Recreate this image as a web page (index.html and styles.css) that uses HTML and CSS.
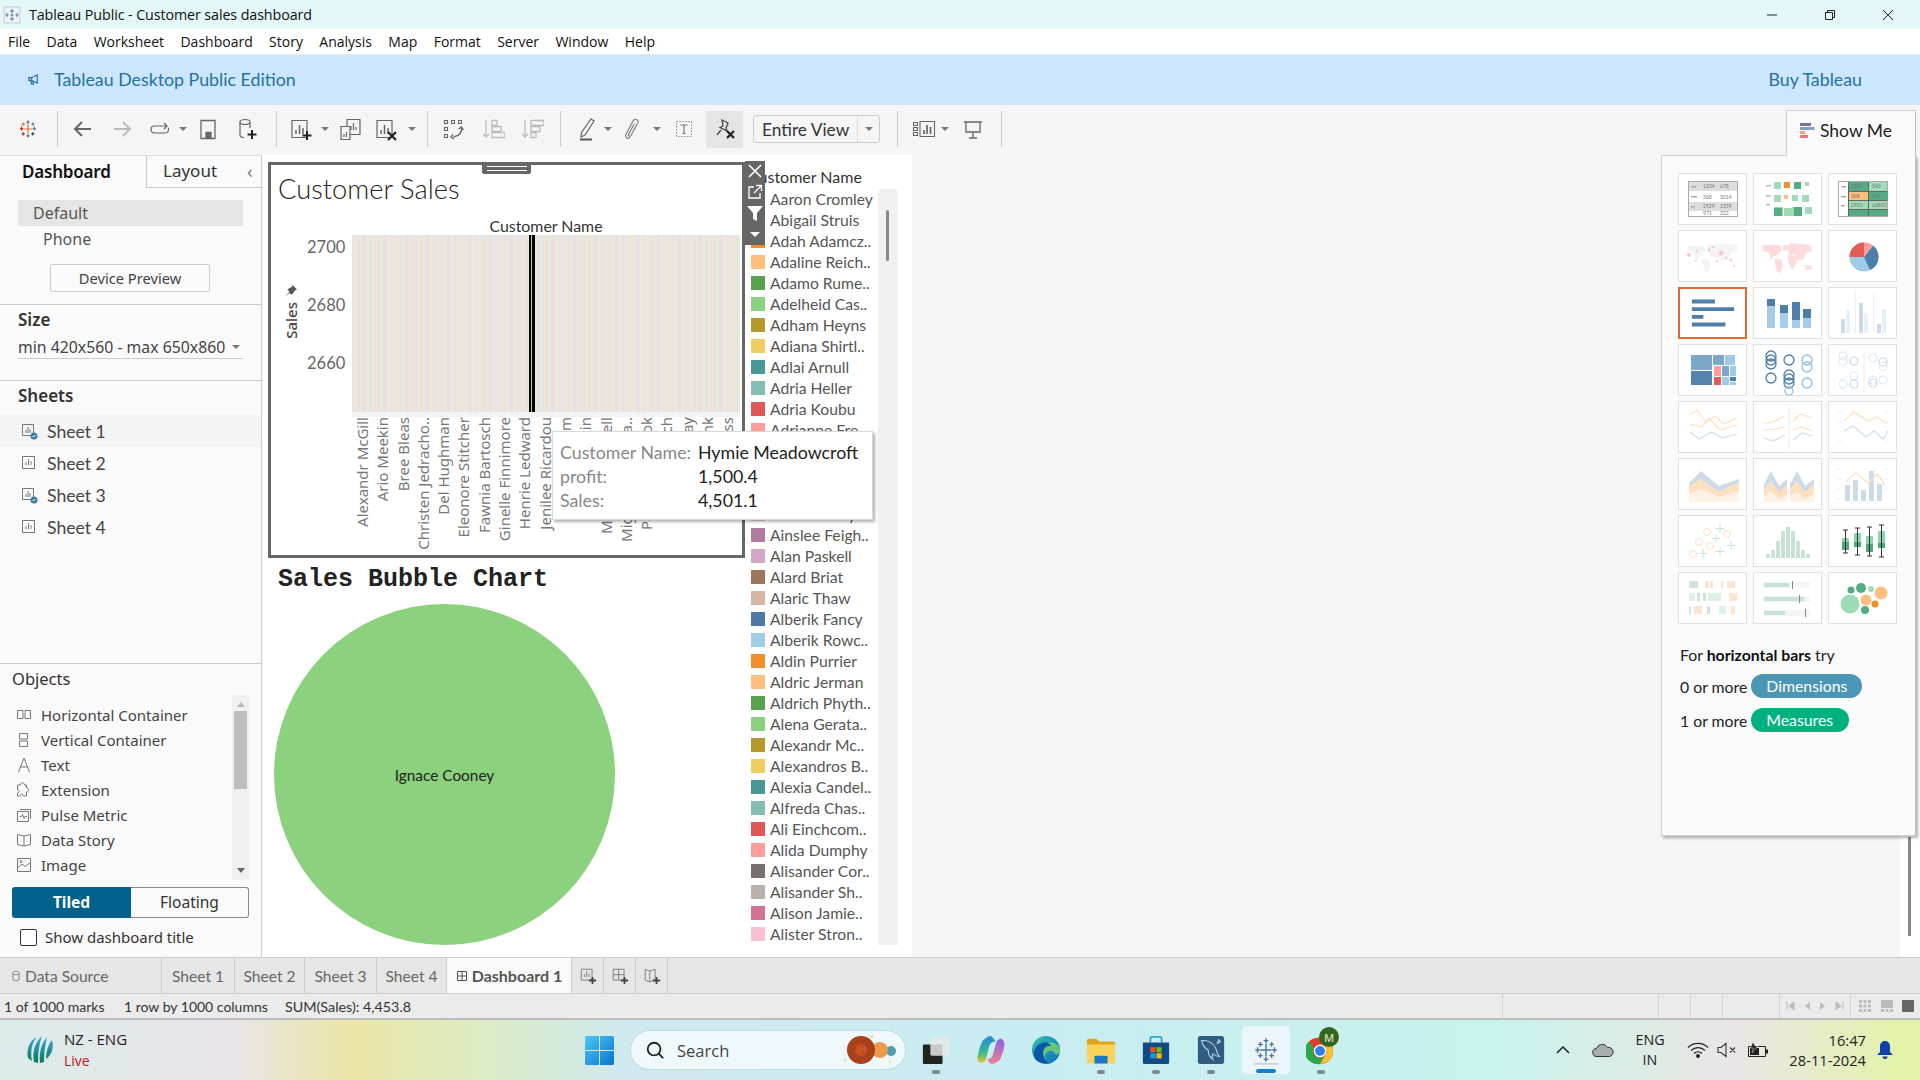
FILE: index.html
```html
<!DOCTYPE html>
<html lang="en">
<head>
<meta charset="utf-8">
<title>Tableau Public - Customer sales dashboard</title>
<link rel="stylesheet" href="styles.css">
</head>
<body>
<div class="app">

  <header class="titlebar">
    <svg class="app-icon" viewBox="0 0 18 18"><rect x="1" y="1" width="16" height="16" fill="#eef2f6" stroke="#c8ccd0"/><g stroke="#4f7fa8" stroke-width="1"><path d="M9 3v4M7 5h4M9 11v4M7 13h4M4 7v4M2.500 9h3M14 7v4M12.500 9h3M9 7.500v3M7.500 9h3"/></g></svg>
    <span class="title-text">Tableau Public - Customer sales dashboard</span>
    <div class="winctl">
      <svg viewBox="0 0 12 12"><path d="M1 6h10" stroke="#222" fill="none"/></svg>
      <svg viewBox="0 0 12 12"><path d="M1.500 3.500h7v7h-7zM3.500 3.500v-2h7v7h-2" stroke="#222" fill="none"/></svg>
      <svg viewBox="0 0 12 12"><path d="M1 1l10 10M11 1L1 11" stroke="#222" fill="none"/></svg>
    </div>
  </header>

  <nav class="menubar">
    <span>File</span><span>Data</span><span>Worksheet</span><span>Dashboard</span><span>Story</span><span>Analysis</span><span>Map</span><span>Format</span><span>Server</span><span>Window</span><span>Help</span>
  </nav>

  <div class="banner">
    <svg class="banner-icon" viewBox="0 0 14 14"><path d="M2 5h3l6-3v9L5 8H2zM5 5v3M4 8l1 4h2L6 8.500" fill="none" stroke="#1f6f9f" stroke-width="1.200"/></svg>
    <span class="banner-text">Tableau Desktop Public Edition</span>
    <span class="banner-buy">Buy Tableau</span>
  </div>

  <div class="toolbar">
    <svg class="tb" viewBox="-3 -3 30 30" fill="none" stroke-width="1.500"><path d="M12 6v12M6 12h12" stroke="#e8762d"/><path d="M12 1.500v4M10 3.500h4" stroke="#5b6a9a"/><path d="M12 18.500v4M10 20.500h4" stroke="#4e79a7"/><path d="M4 9v5M2 11.500h4" stroke="#c72035"/><path d="M20 9v5M18 11.500h4" stroke="#59879b"/><path d="M6 4v4M4 6h4" stroke="#e8762d"/><path d="M18 4v4M16 6h4" stroke="#59879b"/><path d="M6 16v4M4 18h4" stroke="#c72035"/><path d="M18 16v4M16 18h4" stroke="#1f447a"/></svg>
    <i class="sep ml17"></i>
    <svg class="tb ml13" viewBox="0 0 24 24" fill="none" stroke="#666" stroke-width="2"><path d="M20 12H5M11 5l-7 7 7 7"/></svg>
    <svg class="tb ml15" viewBox="0 0 24 24" fill="none" stroke="#bbb" stroke-width="2"><path d="M4 12h15M13 5l7 7-7 7"/></svg>
    <svg class="tb ml14" viewBox="0 0 24 24" fill="none" stroke="#666" stroke-width="1.200"><path d="M9 9H6.500a3.500 3.500 0 0 0 0 7H17a3.500 3.500 0 0 0 3-5.500M9 9h10M16 6l3 3-3 3"/></svg>
    <i class="caret ml7"></i>
    <svg class="tb ml9" viewBox="0 0 24 24" fill="none" stroke="#666" stroke-width="1.300"><path d="M5 3.500h14v18H5z"/><path d="M10 21.500v-6h5v6" fill="#666"/></svg>
    <svg class="tb ml15" viewBox="0 0 24 24" fill="none" stroke="#666" stroke-width="1.200"><ellipse cx="10" cy="5" rx="5" ry="2.500"/><path d="M5 5v13c0 1.500 2 2.500 4 2.500M15 5v6"/><path d="M17 13v9M12.500 17.500h9" stroke="#222" stroke-width="2"/></svg>
    <i class="sep ml17"></i>
    <svg class="tb ml12" viewBox="0 0 24 24" fill="none" stroke="#666" stroke-width="1.200"><path d="M3 3.500h15v17H3z"/><path d="M7 17v-4M10.500 17V8M14 17v-6" stroke-width="1.500"/><path d="M18 14v9M13.500 18.500h9" stroke="#222" stroke-width="2"/></svg>
    <i class="caret ml8"></i>
    <svg class="tb ml9" viewBox="0 0 24 24" fill="none" stroke="#666" stroke-width="1.200"><path d="M9 2.500h13v15H9z" fill="#f5f5f5"/><path d="M13 13V9M15.500 13V6M18 13v-3"/><path d="M3 9.500h9v13H3z" fill="#f5f5f5"/><path d="M6 20v-3M8.500 20v-5"/></svg>
    <svg class="tb ml12" viewBox="0 0 24 24" fill="none" stroke="#666" stroke-width="1.200"><path d="M3 3.500h15v17H3z"/><path d="M7 17v-4M10.500 17V8M14 17v-6" stroke-width="1.500"/><path d="M14 15l8 8M22 15l-8 8" stroke="#222" stroke-width="2.200"/></svg>
    <i class="caret ml10"></i>
    <i class="sep ml11"></i>
    <svg class="tb ml13" viewBox="0 0 24 24" fill="none" stroke="#666" stroke-width="1.100"><path d="M3.500 3.500h3v3h-3zM10.500 3.500h3v3h-3zM17.500 3.500h3v3h-3zM3.500 10.500h3v3h-3zM3.500 17.500h3v3h-3z"/><path d="M20.500 10c1 5-2 9-8 10M12 17.500l-2 2.500 3 2M17.500 12l3-2 2 3" stroke-width="1.300"/></svg>
    <svg class="tb ml16" viewBox="0 0 24 24" fill="none" stroke="#bbb" stroke-width="1.300"><path d="M5 3v17M2 17l3 3 3-3"/><path d="M11 3.500h5v5h-5zM11 9.500h9v5h-9zM11 15.500h13v5H11z"/></svg>
    <svg class="tb ml15" viewBox="0 0 24 24" fill="none" stroke="#bbb" stroke-width="1.300"><path d="M5 3v17M2 17l3 3 3-3"/><path d="M11 3.500h13v5H11zM11 9.500h9v5h-9zM11 15.500h5v5h-5z"/></svg>
    <i class="sep ml16"></i>
    <svg class="tb ml13" viewBox="0 0 24 24" fill="none" stroke="#666" stroke-width="1.200"><path d="M17 2l3 2-9 14-4 2 .5-4.500z"/><path d="M6 22.500h12" stroke="#555" stroke-width="2"/></svg>
    <i class="caret ml6"></i>
    <svg class="tb ml8" viewBox="0 0 24 24" fill="none" stroke="#888" stroke-width="1.300"><path d="M10 20.500c-3 2-5-.5-4-3L13 4c1.500-3 6-1.500 5 1.500l-7 13c-1 1.500-3 .5-2.500-1l6-11"/></svg>
    <i class="caret ml9"></i>
    <svg class="tb ml11" viewBox="0 0 24 24" fill="none" stroke="#888" stroke-width="1"><path d="M4.500 4.500h15v15h-15z" stroke-dasharray="1.500 1.500"/><path d="M8.500 8h7M12 8v8.500M10.500 16.500h3" stroke="#777" stroke-width="1.200"/></svg>
    <div class="tb-active ml10"><svg class="tb" viewBox="0 0 24 24" fill="none" stroke="#444" stroke-width="1.300"><path d="M9 3l6 3-2 5 1 3-7-3.500 3-1.500zM8 13l-4 5"/><path d="M14 14l7 7M21 14l-7 7" stroke="#222" stroke-width="2.200"/></svg></div>
    <div class="combo ml10"><span class="combo-text">Entire View</span><span class="combo-btn"><i class="caret"></i></span></div>
    <i class="sep ml17"></i>
    <svg class="tb ml14" viewBox="0 0 24 24" fill="none" stroke="#666" stroke-width="1.100"><path d="M1.500 5.500h4v3h-4zM1.500 10.500h4v3h-4zM1.500 15.500h4v3h-4zM8 4.500h14.500v15H8z"/><path d="M12 17v-4M15 17V8M18.500 17v-7" stroke-width="1.700"/></svg>
    <i class="caret ml5"></i>
    <svg class="tb ml12" viewBox="0 0 24 24" fill="none" stroke="#666" stroke-width="1.300"><path d="M3 5h18M5 5v10h14V5M12 15v6M8 21h8"/></svg>
    <i class="sep ml16"></i>
  </div>

  <main class="main">
    <aside class="side">
      <div class="side-tabs">
        <div class="side-tab is-on">Dashboard</div>
        <div class="side-tab">Layout<span class="chev">&#8249;</span></div>
      </div>
      <section class="device">
        <div class="device-row is-on">Default</div>
        <div class="device-row sub">Phone</div>
        <button class="device-btn">Device Preview</button>
      </section>
      <section class="size-sec">
        <h3 class="side-h">Size</h3>
        <div class="size-combo"><span>min 420x560 - max 650x860</span><i class="caret"></i></div>
      </section>
      <section class="sheets-sec">
        <h3 class="side-h">Sheets</h3>
        <ul class="sheets">
          <li class="sheet is-on"><svg class="sheet-ic" viewBox="0 0 18 18" fill="none" stroke="#777"><path d="M1.500 2.500h11v11h-11zM5 11V8M7 11V5M9 11V7"/><circle cx="13" cy="14" r="3.500" fill="#3b7ea1" stroke="none"/><path d="M11.500 14l1 1 2-2" stroke="#fff"/></svg>Sheet 1</li>
          <li class="sheet"><svg class="sheet-ic" viewBox="0 0 18 18" fill="none" stroke="#777"><path d="M1.500 2.500h12v12h-12zM5 11V8M7.500 11V5M10 11V7"/></svg>Sheet 2</li>
          <li class="sheet"><svg class="sheet-ic" viewBox="0 0 18 18" fill="none" stroke="#777"><path d="M1.500 2.500h11v11h-11zM5 11V8M7 11V5M9 11V7"/><circle cx="13" cy="14" r="3.500" fill="#3b7ea1" stroke="none"/><path d="M11.500 14l1 1 2-2" stroke="#fff"/></svg>Sheet 3</li>
          <li class="sheet"><svg class="sheet-ic" viewBox="0 0 18 18" fill="none" stroke="#777"><path d="M1.500 2.500h12v12h-12zM5 11V8M7.500 11V5M10 11V7"/></svg>Sheet 4</li>
        </ul>
      </section>
      <section class="objects-sec">
        <h3 class="side-h">Objects</h3>
        <div class="objects-wrap">
          <ul class="objects">
            <li><svg class="obj-ic" viewBox="0 0 16 16" fill="none" stroke="#777"><path d="M1.500 3.500h5.500v8H1.500zM9 3.500h5.500v8H9z"/></svg>Horizontal Container</li>
            <li><svg class="obj-ic" viewBox="0 0 16 16" fill="none" stroke="#777"><path d="M3.500 1.500h8v5.500h-8zM3.500 9h8v5.500h-8z"/></svg>Vertical Container</li>
            <li><svg class="obj-ic" viewBox="0 0 16 16" fill="none" stroke="#777"><path d="M2.500 15L8 1l5.500 14M4.500 10h7"/></svg>Text</li>
            <li><svg class="obj-ic" viewBox="0 0 16 16" fill="none" stroke="#777"><path d="M1.500 6V3h3c0-3 4-3 4 0h2v3c3 0 3 4 0 4v4h-3c0-2.500-3-2.500-3 0h-3v-3c2 0 2-3 0-3z"/></svg>Extension</li>
            <li><svg class="obj-ic" viewBox="0 0 16 16" fill="none" stroke="#777"><path d="M1.500 4.500h11v10h-11zM4 2.500h10.500v9"/><path d="M3.500 9.500h2l1-2 1.500 4 1-2h2"/></svg>Pulse Metric</li>
            <li><svg class="obj-ic" viewBox="0 0 16 16" fill="none" stroke="#777"><path d="M1.500 2.500L8 4l6.500-1.500v10L8 14l-6.500-1.500zM8 4v10"/></svg>Data Story</li>
            <li><svg class="obj-ic" viewBox="0 0 16 16" fill="none" stroke="#777"><path d="M1.500 1.500h13v13h-13zM1.500 11L6 7l3 2.500 5.500-4"/><circle cx="5" cy="4.500" r="1"/></svg>Image</li>
          </ul>
          <div class="objects-track"><i class="up"></i><b class="thumb"></b><i class="down"></i></div>
        </div>
        <div class="toggle"><span class="tog is-on">Tiled</span><span class="tog">Floating</span></div>
        <label class="show-title"><i class="checkbox"></i>Show dashboard title</label>
      </section>
    </aside>

    <section class="dash">
      <div class="dash-left">
        <div class="chart-box">
          <div class="handle"><i></i><i></i></div>
          <div class="sheet-tools">
            <svg viewBox="0 0 20 20" fill="none" stroke="#fff" stroke-width="1.600"><path d="M4 4l12 12M16 4L4 16"/></svg>
            <svg viewBox="0 0 20 20" fill="none" stroke="#fff" stroke-width="1.300"><path d="M9 5H4v11h11v-5M9 11l7-7M11 3.500h5.500V9"/></svg>
            <svg viewBox="0 0 20 20"><path d="M2 3h16l-6 7v8l-4-2v-6z" fill="#fff"/></svg>
            <svg viewBox="0 0 20 20"><path d="M5 8h10l-5 5z" fill="#fff"/></svg>
          </div>
          <h2 class="chart-title">Customer Sales</h2>
          <div class="chart-head">Customer Name</div>
          <div class="chart-body">
            <div class="y-title"><svg class="pin" viewBox="0 0 12 12"><path d="M7 0l5 5-2 1-2 3-1 1-2-2-4 4 4-5-2-2 2-1 3-2z" fill="#555"/></svg><span>Sales</span></div>
            <div class="y-ticks"><span>2700</span><span>2680</span><span>2660</span></div>
            <div class="plot"><i class="sel"></i></div>
          </div>
          <div class="plot-band"></div>
          <div class="x-labels">
            <span>Alexandr McGill</span><span>Ario Meekin</span><span>Bree Bleas</span><span>Christen Jedracho..</span><span>Del Hughman</span><span>Eleonore Stitcher</span><span>Fawnia Bartosch</span><span>Ginelle Finnimore</span><span>Henrie Ledward</span><span>Jenilee Ricardou</span><span>Kira Stratham</span><span>Lorin Maskin</span><span>Madelina Howell</span><span>Miguela Pacheta..</span><span>Pace Westbrook</span><span>Rubie Hatch</span><span>Sheila Gallway</span><span>Tiler Blank</span><span>Vinny Rhodess</span>
          </div>
        </div>
        <h2 class="bubble-title">Sales Bubble Chart</h2>
        <div class="bubble"><span>Ignace Cooney</span></div>
      </div>

      <div class="legend">
        <div class="legend-title">Customer Name</div>
        <div class="legend-body">
          <ul class="legend-list">
            <li><i class="c0"></i>Aaron Cromley</li><li><i class="c1"></i>Abigail Struis</li><li><i class="c2"></i>Adah Adamcz..</li><li><i class="c3"></i>Adaline Reich..</li><li><i class="c4"></i>Adamo Rume..</li><li><i class="c5"></i>Adelheid Cas..</li><li><i class="c6"></i>Adham Heyns</li><li><i class="c7"></i>Adiana Shirtl..</li><li><i class="c8"></i>Adlai Arnull</li><li><i class="c9"></i>Adria Heller</li><li><i class="c10"></i>Adria Koubu</li><li><i class="c11"></i>Adrianne Fre..</li><li><i class="c12"></i></li><li><i class="c13"></i></li><li><i class="c14"></i></li><li><i class="c15"></i>Aimee Bixby</li><li><i class="c16"></i>Ainslee Feigh..</li><li><i class="c17"></i>Alan Paskell</li><li><i class="c18"></i>Alard Briat</li><li><i class="c19"></i>Alaric Thaw</li><li><i class="c0"></i>Alberik Fancy</li><li><i class="c1"></i>Alberik Rowc..</li><li><i class="c2"></i>Aldin Purrier</li><li><i class="c3"></i>Aldric Jerman</li><li><i class="c4"></i>Aldrich Phyth..</li><li><i class="c5"></i>Alena Gerata..</li><li><i class="c6"></i>Alexandr Mc..</li><li><i class="c7"></i>Alexandros B..</li><li><i class="c8"></i>Alexia Candel..</li><li><i class="c9"></i>Alfreda Chas..</li><li><i class="c10"></i>Ali Einchcom..</li><li><i class="c11"></i>Alida Dumphy</li><li><i class="c12"></i>Alisander Cor..</li><li><i class="c13"></i>Alisander Sh..</li><li><i class="c14"></i>Alison Jamie..</li><li><i class="c15"></i>Alister Stron..</li>
          </ul>
          <div class="legend-track"><b></b></div>
        </div>
      </div>
    </section>

    <div class="canvas-rest"></div>
    <div class="right-strip"><i></i></div>
  </main>

  <div class="tabs">
    <div class="tab tab-ds"><svg class="tab-ic" viewBox="0 0 10 14" fill="none" stroke="#777"><path d="M1.500 3v8c0 2 7 2 7 0V3c0-2-7-2-7 0zM1.500 4.500c0 1.500 7 1.500 7 0"/></svg>Data Source</div>
    <div class="tab tab-s1">Sheet 1</div>
    <div class="tab tab-s">Sheet 2</div>
    <div class="tab tab-s3">Sheet 3</div>
    <div class="tab tab-s">Sheet 4</div>
    <div class="tab tab-db"><svg class="tab-ic" viewBox="0 0 12 12" fill="none" stroke="#555"><path d="M1.500 1.500h9v9h-9zM6 1.500v9M1.500 6h9"/></svg>Dashboard 1</div>
    <div class="tab tab-add"><svg viewBox="0 0 20 20" fill="none" stroke="#777"><path d="M2.500 2.500h12v12h-12zM6 11V8M8.500 11V5M11 11V7"/><path d="M15 11v8M11 15h8" stroke="#444" stroke-width="2"/></svg></div>
    <div class="tab tab-add"><svg viewBox="0 0 20 20" fill="none" stroke="#777"><path d="M2.500 2.500h12v12h-12zM8.500 2.500v12M2.500 8.500h12"/><path d="M15 11v8M11 15h8" stroke="#444" stroke-width="2"/></svg></div>
    <div class="tab tab-add"><svg viewBox="0 0 20 20" fill="none" stroke="#777"><path d="M2.500 2.500l5 2 6-2v12l-6 2-5-2zM7.500 4.500v12"/><path d="M15 11v8M11 15h8" stroke="#444" stroke-width="2"/></svg></div>
  </div>

  <footer class="status">
    <span class="st-a">1 of 1000 marks</span>
    <span class="st-b">1 row by 1000 columns</span>
    <span class="st-c">SUM(Sales): 4,453.8</span>
    <div class="st-cells">
      <i class="cell w156"></i><i class="cell w32"></i><i class="cell w32"></i><i class="cell w57"></i>
      <div class="cell pager">
        <svg viewBox="0 0 10 12"><path d="M2 2v8M9 2v8L4 6z" fill="#bbb" stroke="#bbb"/></svg>
        <svg viewBox="0 0 10 12"><path d="M8 2v8L3 6z" fill="#bbb"/></svg>
        <svg viewBox="0 0 10 12"><path d="M2 2v8l5-4z" fill="#bbb"/></svg>
        <svg viewBox="0 0 10 12"><path d="M8 2v8M1 2v8l5-4z" fill="#bbb" stroke="#bbb"/></svg>
      </div>
      <div class="views">
        <svg viewBox="0 0 12 12"><path d="M0 0h3v3H0zM4.500 0h3v3h-3zM9 0h3v3H9zM0 4.500h3v3H0zM4.500 4.500h3v3h-3zM9 4.500h3v3H9zM0 9h3v3H0zM4.500 9h3v3h-3zM9 9h3v3H9z" fill="#bbb"/></svg>
        <svg viewBox="0 0 12 12"><path d="M0 0h12v8H0zM0 9h3v3H0zM4.500 9h3v3h-3zM9 9h3v3H9z" fill="#bbb"/></svg>
        <svg viewBox="0 0 12 12"><path d="M0 0h12v12H0z" fill="#666"/></svg>
      </div>
    </div>
  </footer>

  <div class="taskbar">
    <div class="widget">
      <svg class="widget-ic" viewBox="0 0 28 32"><defs><linearGradient id="icc" x1="0" y1="0" x2="0" y2="1"><stop offset="0" stop-color="#3fa7d6"/><stop offset="1" stop-color="#0c7a5a"/></linearGradient></defs><path d="M2 24C0 15 4 6 11 3 6 9 4 17 6 27zM8 28C6 18 9 8 16 2c-3 8-4 17-4 27zM14 29c-1-10 1-19 7-26-2 8-3 17-3 25zM20 25c0-7 2-14 6-19 2 7 0 15-6 19z" fill="url(#icc)"/></svg>
      <div class="widget-text"><span>NZ - ENG</span><span class="live">Live</span></div>
    </div>
    <svg class="start" viewBox="0 0 29 29"><defs><linearGradient id="win" x1="0" y1="0" x2="1" y2="1"><stop offset="0" stop-color="#4cc8f5"/><stop offset="1" stop-color="#0a74d1"/></linearGradient></defs><path d="M0 1.500q0-1.500 1.500-1.500H14v14H0zM15 0h12.500q1.500 0 1.500 1.500V14H15zM0 15h14v14H1.500Q0 29 0 27.500zM15 15h14v12.500q0 1.500-1.500 1.500H15z" fill="url(#win)"/></svg>
    <div class="search">
      <svg class="search-ic" viewBox="0 0 22 22" fill="none" stroke="#222" stroke-width="2"><circle cx="10" cy="10" r="7"/><path d="M15 15l5 5"/></svg>
      <span class="search-text">Search</span>
      <svg class="search-art" viewBox="0 0 54 34"><circle cx="48" cy="18" r="5" fill="#4f9fb0"/><circle cx="37" cy="17" r="8" fill="#eb9a4e"/><circle cx="18" cy="17" r="14" fill="#a8401a"/><circle cx="18" cy="17" r="6" fill="#c8501f"/><path d="M2 26l1 1-1 1-1-1zM29 2l1 1.500-1 1.500-1-1.500zM47 28l1 1-1 1-1-1z" fill="#e8b93a"/></svg>
    </div>
    <div class="task ml7"><svg viewBox="0 0 32 32"><rect x="2" y="10" width="21" height="21" rx="1.500" fill="#222"/><rect x="10" y="2" width="20" height="20" rx="1.500" fill="#e8e8e8" opacity=".85"/></svg></div>
    <div class="task"><svg viewBox="0 0 32 32"><defs><linearGradient id="cp1" x1="0" y1="0" x2="0" y2="1"><stop offset="0" stop-color="#2a8be0"/><stop offset=".6" stop-color="#38b68a"/><stop offset="1" stop-color="#f3c42e"/></linearGradient><linearGradient id="cp2" x1="0" y1="0" x2="0" y2="1"><stop offset="0" stop-color="#8a63e8"/><stop offset="1" stop-color="#f0808a"/></linearGradient></defs><path d="M12 2c2-1 5-1 6 1l3 4c-3 0-6 2-7 5l-3 12c-1 4-3 6-6 6-4-2-4-5-3-9 1-5 3-11 5-15z" fill="url(#cp1)"/><path d="M20 30c-2 1-5 1-6-1l-2-3c3 0 5-2 6-5l3-11c1-4 3-6 6-6 3 2 4 5 3 9-1 5-3 11-5 14z" fill="url(#cp2)"/></svg></div>
    <div class="task"><svg viewBox="0 0 32 32"><defs><linearGradient id="edge" x1="0" y1="0" x2="1" y2="1"><stop offset="0" stop-color="#35c1b0"/><stop offset="1" stop-color="#0a6cc0"/></linearGradient></defs><circle cx="16" cy="16" r="15" fill="url(#edge)"/><path d="M31 17c0-6-5-9-10-9-7 0-12 5-12 11 0 7 6 12 13 11-5-1-8-5-7-9 1-3 4-5 7-4 2 .5 4 2 4 4 3 0 5-2 5-4z" fill="#7dd96a" opacity=".75"/><path d="M3 21c0-8 6-13 12-13 4 0 6 2 6 4-4-1-8 2-8 7s3 9 7 11C10 31 3 27 3 21z" fill="#0b57a8"/></svg></div>
    <div class="task"><svg viewBox="0 0 32 32"><path d="M1 6q0-2 2-2h8l3 3h15q2 0 2 2v4H1z" fill="#e0a21b"/><path d="M1 10h30v19q0 1.500-1.500 1.500h-27Q1 30.500 1 29z" fill="#fcd35a"/><path d="M10 22h12q1 0 1 1v7.500H9V23q0-1 1-1z" fill="#1a78c9"/></svg></div>
    <div class="task"><svg viewBox="0 0 32 32"><path d="M10 8V4q0-2 2-2h8q2 0 2 2v4" fill="none" stroke="#2aa5d8" stroke-width="2"/><path d="M2 8h28v21q0 2-2 2H4q-2 0-2-2z" fill="#124a86"/><path d="M10 13h5.500v5.500H10z" fill="#f25022"/><path d="M16.500 13H22v5.500h-5.500z" fill="#7fba00"/><path d="M10 19.500h5.500V25H10z" fill="#00a4ef"/><path d="M16.500 19.500H22V25h-5.500z" fill="#ffb900"/></svg></div>
    <div class="task"><svg viewBox="0 0 32 32"><rect x="2" y="1" width="28" height="30" rx="3" fill="#2f5d82"/><path d="M6 6c6-1 12 2 15 8 1 3 1 6 4 9-3 0-5-1-7-3-1 2-1 4 0 6-3-2-5-6-5-10C9 14 7 11 6 6zM24 5l2 2-3 2z" fill="none" stroke="#c8dbe8" stroke-width="1.100"/></svg></div>
    <div class="task task-on"><svg viewBox="0 0 32 32"><rect x="3" y="1" width="26" height="30" fill="#f0f2f4"/><path d="M3 30h26v1.500H3z" fill="#c8c8c8"/><g stroke="#3f7caa" stroke-width="1.500"><path d="M16 9v14M10 16h12M16 3.500v5M13.500 6h5M16 23.500v5M13.500 26h5M7 13v6M4.500 16h5M25 13v6M22.500 16h5M10 7.500v5M7.500 10h5M22 7.500v5M19.500 10h5M10 19.500v5M7.500 22h5M22 19.500v5M19.500 22h5"/></g></svg><i class="task-bar"></i></div>
    <div class="task has-avatar"><svg viewBox="0 0 32 32"><circle cx="15" cy="17" r="14" fill="#e33b2e"/><path d="M15 3a14 14 0 0 1 12 7H15a7 7 0 0 0-6.500 4L3 7a14 14 0 0 1 12-4z" fill="#e33b2e"/><path d="M15 31a14 14 0 0 0 12-21H15a7 7 0 0 1 6 10.500z" fill="#f7c52b"/><path d="M3 7a14 14 0 0 0 12 24l6-10.500A7 7 0 0 1 8.500 14z" fill="#2fa44f"/><circle cx="15" cy="17" r="6" fill="#2f7fe8" stroke="#fff" stroke-width="1.500"/></svg><b class="avatar">M</b></div>

    <div class="tray">
      <svg class="tr-chev" viewBox="0 0 14 8" fill="none" stroke="#222" stroke-width="1.500"><path d="M1 7l6-6 6 6"/></svg>
      <svg class="tr-cloud" viewBox="0 0 22 14"><path d="M5 13.500a4 4 0 0 1-.500-8 6 6 0 0 1 11-1 4.500 4.500 0 0 1 2 9z" fill="#a9adb0" stroke="#333"/></svg>
      <div class="tr-lang"><span>ENG</span><span>IN</span></div>
      <svg class="tr-wifi" viewBox="0 0 22 16" fill="none" stroke="#222" stroke-width="1.200"><path d="M1 5.500a14 14 0 0 1 20 0M4 8.500a10 10 0 0 1 14 0M7 11.500a5.500 5.500 0 0 1 8 0"/><circle cx="11" cy="14" r="1.300" fill="#222"/></svg>
      <svg class="tr-mute" viewBox="0 0 20 16" fill="none" stroke="#333" stroke-width="1.100"><path d="M1 5.500h3L9 1.500v13l-5-4H1zM13 5.500l5 5M18 5.500l-5 5"/></svg>
      <svg class="tr-batt" viewBox="0 0 22 16"><path d="M1.500 4.500h17v10h-17z" fill="none" stroke="#222"/><path d="M3 6h9v7H3z" fill="#222"/><path d="M19 7.500h2v4h-2z" fill="#222"/><path d="M6 0L3.500 6h3L5 11l6-7H8z" fill="#222" stroke="#e4eeda" stroke-width=".5"/></svg>
      <div class="tr-clock"><span>16:47</span><span>28-11-2024</span></div>
      <svg class="tr-bell" viewBox="0 0 16 20"><path d="M8 1a5 5 0 0 1 5 5v6l3 3H0l3-3V6a5 5 0 0 1 5-5z" fill="#0f3fa8"/><path d="M5.500 16.500a2.500 2.500 0 0 0 5 0z" fill="#0f3fa8"/></svg>
    </div>
  </div>

  <!-- floating layer -->
  <div class="tooltip">
    <span class="tt-k">Customer Name:</span><span class="tt-v">Hymie Meadowcroft</span>
    <span class="tt-k">profit:</span><span class="tt-v">1,500.4</span>
    <span class="tt-k">Sales:</span><span class="tt-v">4,501.1</span>
  </div>

  <aside class="showme">
    <div class="sm-tab"><svg class="sm-ic" viewBox="0 0 15 15"><path d="M0 0h11v3H0z" fill="#84699a"/><path d="M0 4h14.500v3H0z" fill="#7f9fc4"/><path d="M0 8h5v3H0z" fill="#f7a56b"/><path d="M0 12h8v3H0z" fill="#ff6f7f"/></svg>Show Me</div>
    <div class="sm-panel">
      <div class="sm-grid">
        <svg class="th" viewBox="0 0 67 50"><rect x="9.500" y="7.500" width="49" height="35" fill="#fff" stroke="#aaa"/><path d="M10 8h48v9H10zM10 28h48v9H10z" fill="#ddd"/><path d="M12 12h5v1.500h-5zM12 22h6v1.500h-6zM12 32h4v1.500h-4z" fill="#aaa"/><g class="th-t"><text x="24" y="14">1234</text><text x="41" y="14">678</text><text x="24" y="25">368</text><text x="41" y="25">3014</text><text x="24" y="34">2929</text><text x="41" y="34">2559</text><text x="24" y="41">971</text><text x="41" y="41">322</text></g></svg>
        <svg class="th" viewBox="0 0 67 50"><path d="M12 11h5v1.500h-5zM12 21h5v1.500h-5zM12 30h4v1.500h-4z" fill="#bbb"/><path d="M20 8h7v7h-7zM20 21h7v7h-7zM40 8h7v7h-7zM38 21h6v6h-6zM48 21h7v7h-7zM20 33h9v9h-9zM38 33h9v9h-9z" fill="#9fdcb6"/><path d="M30 8h6v6h-6z" fill="#f28e2b"/><path d="M30 21h4v4h-4z" fill="#ffbe7d"/><path d="M40 8h7v7h-7zM20 34h8v8h-8zM40 33h8v9h-8z" fill="#54ac85"/><path d="M30 34h8v8h-8zM51 33h7v7h-7zM51 8h4v4h-4z" fill="#9fdcb6"/></svg>
        <svg class="th" viewBox="0 0 67 50"><rect x="9.500" y="7.500" width="49" height="35" fill="#fff" stroke="#aaa"/><path d="M20 8h19v9H20zM40 17h19v9H40zM20 35h39v7H20z" fill="#54ac85"/><path d="M40 8h18v9H40zM20 27h19v8H20zM40 27h18v8H40z" fill="#a0dcb6"/><path d="M20 18h19v8H20z" fill="#ffbe7d"/><path d="M12 12h5v1.500h-5zM12 22h5v1.500h-5zM12 31h4v1.500h-4z" fill="#aaa"/><path d="M19.500 8v34M39.500 8v34M20 17.500h38M20 26.500h38M20 35.500h38" stroke="#666" fill="none"/><g class="th-t"><text x="22" y="14">1234</text><text x="43" y="14">546</text><text x="22" y="24">368</text><text x="43" y="24">340</text><text x="22" y="33">2920</text><text x="43" y="33">60890</text></g></svg>

        <svg class="th" viewBox="0 0 67 50"><path d="M8 15h16l3 4-4 5-3 2-3 4-2-8-6-2zM22 28h8l1 7-3 7-2-3zM28 14l14-1 16 1 2 6-8 2-2 5-8 4-3-5-7 1-2-7z" fill="#f4f4f4"/><g fill="#f4ccd0"><circle cx="10" cy="24" r="2"/><circle cx="18" cy="20" r="1.200"/><circle cx="30" cy="19" r="1.500"/><circle cx="34" cy="16" r="1.300"/><circle cx="42" cy="22" r="2.500"/><circle cx="47" cy="27" r="1.200"/><circle cx="52" cy="29" r="1.500"/><circle cx="55" cy="35" r="1"/><circle cx="38" cy="30" r="1.200"/><circle cx="17" cy="30" r="1"/></g></svg>
        <svg class="th" viewBox="0 0 67 50"><path d="M8 14h17l3 5-5 5-3 1-3 4-2-7-6-2zM20 28h7l2 7-3 7-3-1zM29 14h7l-1 5-6 1zM36 12l20 2 2 6-6 2-2 6-8 2-1-6-6 1-1-8z" fill="#fcdcdc"/><path d="M33 24l8 1 2 7-4 6-3-2zM51 34h6l1 4-6 1z" fill="#fcdcdc"/></svg>
        <svg class="th" viewBox="0 0 67 50"><circle cx="35" cy="26" r="14.500" fill="#a0cbe8"/><path d="M35 26L49.500 26A14.500 14.500 0 0 1 41 39z" fill="#4e7fa8"/><path d="M35 26L44 14.500A14.500 14.500 0 0 1 49.500 26z" fill="#4e7fa8"/><path d="M35 26L20.500 26A14.500 14.500 0 0 1 35 11.500z" fill="#e15d55"/><path d="M35 26V11.500A14.500 14.500 0 0 1 44 14.500z" fill="#ff9d9a"/></svg>

        <svg class="th is-on" viewBox="0 0 67 50"><path d="M12 11h24v4H12zM12 19h44v4H12zM12 27h12v4H12zM12 35h35v4H12z" fill="#4e7fa8"/></svg>
        <svg class="th" viewBox="0 0 67 50"><path d="M13 11h8v7h-8zM26 17h8v8h-8zM38 14h8v18h-8zM49 21h8v9h-8z" fill="#4e7fa8"/><path d="M13 18h8v22h-8zM26 25h8v15h-8zM38 32h8v8h-8zM49 30h8v10h-8z" fill="#a5cdeb"/></svg>
        <svg class="th" viewBox="0 0 67 50"><path d="M12 31h4v14h-4zM30 15h4v30h-4zM48 36h4v9h-4z" fill="#cdd9e5"/><path d="M17 22h4v23h-4zM35 26h4v19h-4zM53 21h4v24h-4z" fill="#e6f0f8"/><path d="M26.500 5v40M44.500 5v40" stroke="#eee" fill="none"/></svg>

        <svg class="th" viewBox="0 0 67 50"><path d="M12 10h21v15H12z" fill="#7ba7ca"/><path d="M12 26h21v14H12z" fill="#5484ab"/><path d="M34 10h11v10H34z" fill="#7ba7ca"/><path d="M46 10h10v10H46z" fill="#a0cbe8"/><path d="M35 21h7v10h-7z" fill="#ff9d9a"/><path d="M43 21h7v10h-7z" fill="#7ba7ca"/><path d="M51 21h6v10h-6z" fill="#a0cbe8"/><path d="M35 32h7v8h-7z" fill="#e15d55"/><path d="M43 32h7v8h-7z" fill="#a0cbe8"/><path d="M51 32h6v4h-6z" fill="#4e7fa8"/><path d="M51 37h6v3h-6z" fill="#a0cbe8"/></svg>
        <svg class="th" viewBox="0 0 67 50" fill="none" stroke-width="1.300"><g stroke="#4e7fa8"><circle cx="17" cy="11" r="5"/><circle cx="17" cy="15" r="5"/><circle cx="17" cy="19" r="5"/><circle cx="17" cy="33" r="5"/><circle cx="35" cy="15" r="5"/><circle cx="35" cy="30" r="5"/><circle cx="35" cy="34" r="5"/><circle cx="35" cy="38" r="5"/></g><g stroke="#8ec0e3"><circle cx="53" cy="15" r="5"/><circle cx="53" cy="22" r="5"/><circle cx="53" cy="38" r="5"/><circle cx="35" cy="46" r="4"/></g></svg>
        <svg class="th" viewBox="0 0 67 50" fill="none" stroke="#dbe8f3" stroke-width="1.200"><path d="M35 5v42" stroke="#eee"/><circle cx="14" cy="11" r="4"/><circle cx="14" cy="16" r="4"/><circle cx="25" cy="16" r="4" stroke="#c8d5e2"/><circle cx="25" cy="31" r="4"/><circle cx="25" cy="39" r="4" stroke="#c8d5e2"/><circle cx="14" cy="39" r="4"/><circle cx="44" cy="13" r="4"/><circle cx="54" cy="17" r="4" stroke="#c8d5e2"/><circle cx="54" cy="21" r="4"/><circle cx="44" cy="35" r="4"/><circle cx="44" cy="38" r="4" stroke="#c8d5e2"/><circle cx="54" cy="35" r="4"/></svg>

        <svg class="th" viewBox="0 0 67 50" fill="none" stroke-width="1.200"><path d="M11 13l7-5 9 12 9-6 9 8 13-6" stroke="#fde0c0"/><path d="M11 22l12 3 7-9 11 12 17-5" stroke="#fde0c0"/><path d="M11 30l9 7 13-7 10 6 15-4" stroke="#cfdeeb"/></svg>
        <svg class="th" viewBox="0 0 67 50" fill="none" stroke-width="1.200"><path d="M35 5v42" stroke="#eee"/><path d="M10 22l11-3 10-5M39 19l8-7 11 4" stroke="#fde0c0"/><path d="M10 28l11-1 10-2M39 28l9-3 10 4" stroke="#fde0c0"/><path d="M10 36l9 3 12-6M39 38l9-7 10 3" stroke="#cfdeeb"/></svg>
        <svg class="th" viewBox="0 0 67 50" fill="none" stroke-width="1.200"><path d="M9 10h4M9 20h4M9 30h4M9 40h4M56 10h4M56 20h4M56 30h4M56 40h4" stroke="#eee"/><path d="M15 19l10-9 14 9 9-4 10 7" stroke="#fde0c0"/><path d="M15 29l9-5 13 11 8-6 9 8 5-8" stroke="#cfdeeb"/></svg>

        <svg class="th" viewBox="0 0 67 50"><path d="M10 24L22 12 40 27l20-7v23H10z" fill="#cddbe8"/><path d="M10 27L22 20 40 33l20-10v20H10z" fill="#fde0c0"/><path d="M10 35L22 30 40 38l20-6v11H10z" fill="#fff2e4"/></svg>
        <svg class="th" viewBox="0 0 67 50"><path d="M10 25L17 12 25 27 33 20V43H10zM36 25L43 12 51 27 60 20V43H36z" fill="#cddbe8"/><path d="M10 30L17 22 25 33 33 25V43H10zM36 30L43 22 51 33 60 25V43H36z" fill="#fde0c0"/><path d="M10 37L17 32 25 40 33 35V43H10zM36 37L43 32 51 40 60 35V43H36z" fill="#fff2e4"/></svg>
        <svg class="th" viewBox="0 0 67 50"><path d="M8 10h4M8 20h4M8 30h4M8 40h4M56 10h4M56 20h4M56 30h4M56 40h4" stroke="#eee" fill="none"/><path d="M16 26h5v16h-5zM24 21h5v21h-5zM32 31h5v11h-5zM40 12h5v30h-5zM48 25h5v17h-5z" fill="#cddbe8"/><path d="M17 22l10-8 12 10 9-9 8 11" stroke="#fde0c0" stroke-width="1.300" fill="none"/></svg>

        <svg class="th" viewBox="0 0 67 50" fill="none" stroke-width="1"><g stroke="#fde0c0"><circle cx="28" cy="16" r="3.500"/><circle cx="48" cy="18" r="3.500"/><circle cx="20" cy="26" r="3.500"/><circle cx="31" cy="30" r="3.500"/><circle cx="14" cy="38" r="3.500"/></g><path d="M41 8v9M36.500 12.500h9M37 18v9M32.500 22.500h9M52 25v9M47.500 29.500h9M24 33v9M19.500 37.500h9M41 31v9M36.500 35.500h9" stroke="#c8e6d8"/></svg>
        <svg class="th" viewBox="0 0 67 50"><path d="M12 38h4v4h-4zM17 34h4v8h-4zM22 25h4v17h-4zM27 15h4v27h-4zM32 11h4v31h-4zM37 15h4v27h-4zM42 25h4v17h-4zM47 34h4v8h-4zM52 38h4v4h-4z" fill="#c8e3d5"/></svg>
        <svg class="th" viewBox="0 0 67 50"><path d="M13 22h7v12h-7zM37 20h7v14h-7z" fill="#8fd4aa"/><path d="M25 17h7v13h-7zM49 15h7v12h-7z" fill="#8fd4aa"/><path d="M13 26h7v8h-7zM25 26h7v5h-7zM37 28h7v8h-7zM49 27h7v5h-7z" fill="#4ea77c"/><path d="M16.500 14v23M14 14h5M14 37h5M28.500 12v27M26 12h5M26 39h5M40.500 11v29M38 11h5M38 40h5M52.500 9v32M50 9h5M50 41h5" stroke="#333" fill="none"/></svg>

        <svg class="th" viewBox="0 0 67 50"><path d="M10 8h9v7h-9zM10 20h6v8h-6zM18 20h3v8h-3zM24 20h3v8h-3z M10 33h2v8h-2zM28 33h3v8h-3z" fill="#cde6d8"/><path d="M10 20h6v8h-6zM29 20h13v8H29zM40 33h7v8h-7z" fill="#dff0e6"/><path d="M26 8h4v7h-4zM31 8h3v7h-3zM42 8h2v7h-2zM48 8h8v7h-8zM50 20h8v8h-8zM15 33h8v8h-8zM52 33h4v8h-4z" fill="#fde3cd"/></svg>
        <svg class="th" viewBox="0 0 67 50"><path d="M10 9h46v6H10zM10 23h46v6H10zM10 37h46v6H10z" fill="#f5f5f5"/><path d="M10 10h25v4H10zM10 24h40v4H10zM10 38h21v4H10z" fill="#c8e3d5"/><path d="M38.500 8v8M45.500 22v8M51.500 36v8" stroke="#888" fill="none"/></svg>
        <svg class="th" viewBox="0 0 67 50"><circle cx="21" cy="31" r="9.500" fill="#9fdcb6"/><circle cx="22" cy="17" r="3.500" fill="#54ac85"/><circle cx="32" cy="15" r="5" fill="#54ac85"/><circle cx="42" cy="16" r="3" fill="#9fdcb6"/><circle cx="52" cy="20" r="6.500" fill="#ffbe7d"/><circle cx="37" cy="27" r="5.500" fill="#ffbe7d"/><circle cx="46" cy="31" r="3.500" fill="#f28e2b"/><circle cx="36" cy="37" r="4" fill="#54ac85"/></svg>
      </div>
      <p class="sm-for">For <b>horizontal bars</b> try</p>
      <div class="sm-req"><span>0 or more</span><span class="pill pill-dim">Dimensions</span></div>
      <div class="sm-req"><span>1 or more</span><span class="pill pill-mea">Measures</span></div>
    </div>
  </aside>
</div>
</body>
</html>
```
FILE: styles.css
```css
* { box-sizing: border-box; }
html, body { margin: 0; padding: 0; }
body { font-family: "Lato", "Liberation Sans", sans-serif; color: #333; overflow: hidden; }
ul { list-style: none; margin: 0; padding: 0; }
h2, h3, p { margin: 0; }
i { display: block; font-style: normal; }
svg { display: block; flex: none; }

.app { position: relative; width: 1920px; height: 1080px; display: flex; flex-direction: column; overflow: hidden; background: #f5f5f5; }

/* title bar */
.titlebar { height: 29px; flex: none; background: #e3f7f7; display: flex; align-items: center; font-family: "Open Sans", sans-serif; font-size: 14.300px; color: #111; }
.app-icon { width: 18px; height: 18px; margin-left: 3px; }
.title-text { margin-left: 8px; letter-spacing: -.1px; }
.winctl { margin-left: auto; display: flex; gap: 46px; padding-right: 26px; }
.winctl svg { width: 12px; height: 12px; }

/* menu */
.menubar { height: 26px; flex: none; background: #fff; border-bottom: 1px solid #e8e8e8; display: flex; align-items: center; gap: 16.400px; padding-left: 8px; font-family: "Open Sans", sans-serif; font-size: 14px; color: #111; }

/* banner */
.banner { height: 50px; flex: none; background: #cce6fd; display: flex; align-items: center; padding: 0 58px 2px 27px; font-size: 17.800px; color: #24729f; }
.banner-icon { width: 13px; height: 13px; }
.banner-text { margin-left: 14px; font-weight: 400; }
.banner-buy { margin-left: auto; }

/* toolbar */
.toolbar { height: 50px; flex: none; background: #f5f5f5; display: flex; align-items: center; padding-left: 16px; padding-bottom: 2px; }
.tb { width: 24px; height: 24px; flex: none; }
.sep { width: 1px; height: 36px; background: #ccc; flex: none; }
.caret { width: 0; height: 0; border-left: 4px solid transparent; border-right: 4px solid transparent; border-top: 4px solid #777; flex: none; }
.ml5 { margin-left: 5px; } .ml6 { margin-left: 6px; } .ml7 { margin-left: 7px; } .ml8 { margin-left: 8px; } .ml9 { margin-left: 9px; }
.ml10 { margin-left: 10px; } .ml11 { margin-left: 11px; } .ml12 { margin-left: 12px; } .ml13 { margin-left: 13px; } .ml14 { margin-left: 14px; }
.ml15 { margin-left: 15px; } .ml16 { margin-left: 16px; } .ml17 { margin-left: 17px; }
.tb-active { width: 37px; height: 37px; background: #e5e5e5; display: flex; align-items: center; justify-content: center; flex: none; }
.combo { width: 127px; height: 28px; border: 1px solid #ccc; border-radius: 3px; display: flex; align-items: center; flex: none; }
.combo-text { width: 103px; padding-left: 8px; font-size: 17.300px; font-weight: 400; color: #333; white-space: nowrap; }
.combo-btn { flex: 1; align-self: stretch; border-left: 1px solid #ddd; display: flex; align-items: center; justify-content: center; }

/* main */
.main { height: 802px; flex: none; display: flex; }

/* sidebar */
.side { width: 262px; flex: none; background: #fafafa; border-right: 1px solid #ccc; display: flex; flex-direction: column; font-family: "Noto Sans", sans-serif; }
.side-tabs { height: 33px; flex: none; display: flex; border-top: 1px solid #ddd; }
.side-tab { position: relative; display: flex; align-items: center; font-size: 17px; padding-bottom: 2px; }
.side-tab:first-child { width: 147px; padding-left: 22px; border-right: 1px solid #ccc; font-weight: 600; color: #111; letter-spacing: -.2px; }
.side-tab:last-child { flex: 1; padding-left: 16px; border-bottom: 1px solid #ccc; color: #333; }
.chev { margin-left: 30px; font-size: 18px; color: #777; }
.device { height: 117px; flex: none; padding-top: 12px; border-bottom: 1px solid #ccc; }
.device-row { margin: 0 18px; height: 26px; line-height: 26px; font-size: 16px; color: #555; padding-left: 15px; }
.device-row.is-on { background: #e5e5e5; }
.device-row.sub { padding-left: 25px; }
.device-btn { display: block; margin: 12px 0 0 50px; width: 160px; height: 28px; background: #fafafa; border: 1px solid #ccc; border-radius: 2px; font: 14.700px "Noto Sans", sans-serif; color: #444; padding: 0; }
.side-h { font-size: 17px; font-weight: 600; color: #333; line-height: 20px; padding-left: 18px; padding-top: 5px; height: 25px; }
.size-sec { height: 76px; flex: none; border-bottom: 1px solid #ccc; }
.size-combo { margin: 6px 18px 0; height: 23px; border-bottom: 1px solid #ccc; display: flex; align-items: center; justify-content: space-between; font-size: 15.800px; color: #444; padding-right: 3px; }
.size-combo span { white-space: nowrap; }
.sheets-sec { height: 283px; flex: none; border-bottom: 1px solid #ccc; }
.sheets { margin-top: 9px; }
.sheet { height: 32px; display: flex; align-items: center; padding-left: 21px; font-family: "Lato", sans-serif; font-size: 17.600px; color: #444; }
.sheet.is-on { background: #f4f4f4; }
.sheet-ic { width: 18px; height: 18px; margin-right: 8px; }
.objects-sec { flex: 1; position: relative; }
.objects-sec .side-h { padding-left: 12px; font-weight: 400; font-size: 16.500px; }
.objects-wrap { display: flex; margin-top: 6px; height: 185px; margin-left: 16px; }
.objects { width: 216px; padding-top: 7px; }
.objects li { height: 25px; display: flex; align-items: center; font-size: 15px; color: #444; white-space: nowrap; }
.obj-ic { width: 16px; height: 16px; margin-right: 9px; }
.objects-track { width: 17px; background: #f0f0f0; display: flex; flex-direction: column; align-items: center; padding-top: 7px; }
.objects-track .up { width: 0; height: 0; border: 4px solid transparent; border-bottom: 5px solid #bbb; border-top: 0; }
.objects-track .thumb { display: block; width: 13px; height: 78px; background: #bdbdbd; margin-top: 4px; }
.objects-track .down { width: 0; height: 0; border: 4px solid transparent; border-top: 5px solid #666; border-bottom: 0; margin-top: auto; margin-bottom: 7px; }
.toggle { display: flex; margin: 7px 0 0 12px; width: 237px; height: 31px; }
.tog { flex: 1; display: flex; align-items: center; justify-content: center; font-size: 15.500px; border: 1px solid #888; border-left: 0; border-radius: 0 3px 3px 0; color: #333; padding-bottom: 1px; }
.tog.is-on { background: #02628c; color: #fff; font-weight: 700; border: 0; border-radius: 3px 0 0 3px; flex: 0 0 119px; }
.show-title { display: flex; align-items: center; margin: 8px 0 0 20px; height: 22px; font-size: 15px; color: #333; }
.checkbox { width: 17px; height: 17px; border: 1px solid #333; border-radius: 2px; margin-right: 8px; background: #fff; }

/* dashboard */
.dash { width: 650px; flex: none; background: #fff; display: flex; padding-left: 6px; }
.dash-left { width: 477px; flex: none; padding-top: 7px; }
.chart-box { position: relative; width: 477px; height: 396px; border: 3px solid #666; background: #fff; }
.handle { position: absolute; left: 211px; top: -3px; width: 49px; height: 12px; background: #666; border-radius: 0 0 2px 2px; display: flex; flex-direction: column; align-items: center; justify-content: center; gap: 3px; }
.handle i { width: 40px; height: 1px; background: #fff; }
.sheet-tools { position: absolute; left: 474px; top: -4px; width: 20px; height: 84px; background: #666; display: flex; flex-direction: column; align-items: center; gap: 1px; padding-top: 0; }
.sheet-tools svg { width: 20px; height: 20px; }
.chart-title { font-size: 27.300px; font-weight: 300; color: #222; line-height: 48px; height: 48px; padding-left: 7px; white-space: nowrap; }
.chart-head { height: 22px; line-height: 26px; padding-left: 81px; width: 469px; text-align: center; font-size: 15.900px; color: #333; }
.chart-body { display: flex; height: 177px; }
.y-title { width: 36px; flex: none; padding-left: 3px; padding-top: 49px; display: flex; flex-direction: column; align-items: center; gap: 5px; }
.pin { width: 13px; height: 13px; }
.y-title span { writing-mode: vertical-rl; transform: rotate(180deg); font-family: "Noto Sans", sans-serif; font-size: 15px; line-height: 18px; font-weight: 500; color: #444; }
.y-ticks { width: 36px; flex: none; margin-right: 9px; display: flex; flex-direction: column; gap: 38px; padding-top: 2px; text-align: right; font-size: 16.500px; line-height: 20px; color: #666; }
.plot { width: 388px; flex: none; display: flex; background: repeating-linear-gradient(90deg, #ece4de 0 2px, #dfe6ec 2px 3px, #f4e4d2 3px 5px, #efe0e2 5px 6px, #dfe8d9 6px 8px, #f2ead4 8px 9px, #e3e6e2 9px 11px, #f2dcdc 11px 12px, #e6e0de 12px 14px, #e9e2ea 14px 15px, #f5e6da 15px 17px, #dde8e5 17px 18px, #e9e4e0 18px 20px, #f0e2e0 20px 21px); }
.sel { width: 6px; margin-left: 177px; background: linear-gradient(90deg, #000 0 2px, #a9d89a 2px 3px, #000 3px 6px); }
.plot-band { height: 5px; margin-left: 81px; width: 388px; background: #f3f3f3; }
.x-labels { display: flex; align-items: flex-start; margin-left: 81px; height: 134px; overflow: hidden; }
.x-labels span { width: 20.300px; flex: none; writing-mode: vertical-rl; transform: rotate(180deg); white-space: nowrap; font-family: "Noto Sans", sans-serif; font-size: 15px; line-height: 20.300px; color: #777; }
.bubble-title { margin-top: 8px; padding-left: 10px; font-family: "Liberation Mono", monospace; font-weight: 700; font-size: 25px; line-height: 28px; color: #222; height: 28px; white-space: nowrap; }
.bubble { width: 341px; height: 341px; margin-top: 10px; border-radius: 50%; background: #8cd17d; display: flex; align-items: center; justify-content: center; font-size: 15.400px; color: #222; margin-left: 6px; }
.legend { flex: 1; }
.legend-title { height: 34px; padding: 13px 0 0 3px; font-size: 16px; line-height: 18px; color: #333; white-space: nowrap; overflow: hidden; }
.legend-body { display: flex; height: 756px; }
.legend-list { width: 133px; flex: none; margin-top: -1px; padding-left: 6px; overflow: hidden; }
.legend-list li { height: 21px; display: flex; align-items: center; font-size: 15.700px; color: #555; white-space: nowrap; }
.legend-list i { width: 14px; height: 14px; flex: none; margin-right: 5px; }
.legend-track { width: 20px; flex: none; background: #f0f0f0; padding: 21px 0 0 8px; }
.legend-track b { display: block; width: 3px; height: 51px; background: #888; border-radius: 2px; }
.c0 { background: #4e79a7; } .c1 { background: #a0cbe8; } .c2 { background: #f28e2b; } .c3 { background: #ffbe7d; } .c4 { background: #59a14f; }
.c5 { background: #8cd17d; } .c6 { background: #b6992d; } .c7 { background: #f1ce63; } .c8 { background: #499894; } .c9 { background: #86bcb6; }
.c10 { background: #e15759; } .c11 { background: #ff9d9a; } .c12 { background: #79706e; } .c13 { background: #bab0ac; } .c14 { background: #d37295; }
.c15 { background: #fabfd2; } .c16 { background: #b07aa1; } .c17 { background: #d4a6c8; } .c18 { background: #9d7660; } .c19 { background: #d7b5a6; }
.canvas-rest { flex: 1; }
.right-strip { width: 20px; flex: none; background: #fff; padding: 682px 0 0 8px; }
.right-strip i { width: 3px; height: 99px; background: #888; }

/* sheet tabs */
.tabs { height: 37px; flex: none; background: #e6e6e6; border-top: 1px solid #ccc; border-bottom: 1px solid #ccc; display: flex; font-size: 15.600px; color: #666; }
.tab { display: flex; align-items: center; justify-content: center; border-right: 1px solid #ccc; flex: none; white-space: nowrap; }
.tab-ds { width: 162px; justify-content: flex-start; padding-left: 10px; }
.tab-s1 { width: 73px; } .tab-s { width: 70px; } .tab-s3 { width: 72px; }
.tab-db { width: 125px; background: #fafafa; font-weight: 700; font-size: 16px; color: #555; }
.tab-add { width: 32px; }
.tab-add svg { width: 18px; height: 18px; }
.tab-ic { width: 12px; height: 12px; margin-right: 4px; }
.tab-ds .tab-ic { margin-right: 3px; }

/* status */
.status { height: 26px; flex: none; background: #ebebeb; border-bottom: 2px solid #bdbdbd; display: flex; align-items: center; position: relative; font-size: 14px; color: #333; padding-top: 1px; }
.st-a { margin-left: 4px; width: 120px; white-space: nowrap; }
.st-b { width: 161px; white-space: nowrap; }
.st-c { white-space: nowrap; font-size: 14.300px; }
.st-cells { margin-left: auto; display: flex; align-self: stretch; margin-top: -1px; }
.cell { border-left: 1px solid #d4d4d4; }
.w156 { width: 156px; } .w32 { width: 32px; } .w57 { width: 57px; }
.pager { width: 71px; display: flex; align-items: center; justify-content: space-between; padding: 0 5px; }
.pager svg { width: 10px; height: 12px; }
.views { width: 70px; border-left: 1px solid #d4d4d4; display: flex; align-items: center; justify-content: space-between; padding: 0 6px 0 8px; }
.views svg { width: 12px; height: 12px; }

/* taskbar */
.taskbar { height: 60px; flex: 1; display: flex; align-items: center; position: relative; font-family: "Open Sans", sans-serif; background: linear-gradient(90deg, #dcebea 0, #e8e4ea 230px, #ebe6a6 350px, #dcecc4 480px, #cfe9ee 620px, #c9ecf2 1000px, #c8f2ec 1500px, #dfeae4 1660px, #ebe5e6 1740px, #e2f2a8 1900px); }
.widget { width: 585px; flex: none; display: flex; align-items: center; padding-left: 26px; }
.widget-ic { width: 28px; height: 32px; }
.widget-text { display: flex; flex-direction: column; margin-left: 10px; font-size: 15px; line-height: 21px; color: #222; }
.live { color: #c5150f; font-size: 14px; }
.start { width: 29px; height: 29px; }
.search { width: 274px; height: 38px; margin-left: 17px; border-radius: 19px; background: #eff8fb; box-shadow: 0 0 0 1px #c4dde4; display: flex; align-items: center; padding-left: 14px; }
.search-ic { width: 20px; height: 20px; }
.search-text { margin-left: 12px; font-size: 16.500px; color: #444; }
.search-art { width: 54px; height: 34px; margin-left: auto; margin-right: 8px; }
.task { position: relative; width: 48px; height: 48px; flex: none; display: flex; align-items: center; justify-content: center; margin-right: 7px; border-radius: 4px; }
.task svg { width: 30px; height: 32px; }
.task::after { content: ""; position: absolute; left: 20px; bottom: 0; width: 8px; height: 4px; border-radius: 2px; background: #7b8a8e; }
.task:first-of-type::after { display: none; }
.task-on { background: #e9f6fa; }
.task-on::after { display: none; }
.task-bar { position: absolute; left: 14px; bottom: 1px; width: 20px; height: 4px; border-radius: 2px; background: #0f7fd8; }
.task:nth-of-type(4)::after, .task:nth-of-type(5)::after { display: none; }
.avatar { position: absolute; left: 22px; top: 1px; width: 20px; height: 20px; border-radius: 50%; background: #33651f; color: #cfe0b8; font-size: 11px; font-weight: 600; display: flex; align-items: center; justify-content: center; }
.tray { position: absolute; left: 0; right: 0; top: 0; bottom: 0; display: flex; align-items: center; padding-left: 1556px; pointer-events: none; }
.tr-chev { width: 14px; height: 8px; }
.tr-cloud { width: 22px; height: 14px; margin-left: 22px; }
.tr-lang { width: 60px; margin-left: 6px; display: flex; flex-direction: column; align-items: center; font-size: 14.300px; line-height: 20px; color: #222; }
.tr-wifi { width: 22px; height: 16px; margin-left: 7px; }
.tr-mute { width: 20px; height: 16px; margin-left: 8px; }
.tr-batt { width: 22px; height: 16px; margin-left: 10px; }
.tr-clock { width: 97px; margin-left: 0; display: flex; flex-direction: column; align-items: flex-end; font-size: 14.700px; line-height: 20px; color: #222; }
.tr-bell { width: 16px; height: 20px; margin-left: 11px; }

/* floating */
.tooltip { position: absolute; left: 552px; top: 431px; width: 321px; height: 89px; background: #fff; border: 1px solid #d8d8d8; box-shadow: 2px 2px 3px rgba(0,0,0,.3); display: grid; grid-template-columns: 138px 1fr; grid-auto-rows: 24px; align-content: center; padding-left: 7px; font-size: 17.800px; line-height: 24px; white-space: nowrap; }
.tt-k { color: #888; }
.tt-v { color: #222; }
.showme { position: absolute; left: 1661px; top: 110px; width: 255px; height: 726px; }
.sm-tab { margin-left: 125px; height: 46px; width: 130px; background: #fafafa; border: 1px solid #d0d0d0; border-bottom: 0; border-right: 1px solid #bbb; display: flex; align-items: center; padding: 0 0 6px 13px; font-size: 17.500px; color: #222; position: relative; z-index: 1; }
.sm-ic { width: 15px; height: 15px; margin-right: 5px; }
.sm-panel { height: 681px; margin-top: -1px; background: #fafafa; border: 1px solid #d0d0d0; border-right: 1px solid #bbb; box-shadow: 2px 2px 3px rgba(0,0,0,.3); padding: 17px 0 0 16px; }
.sm-grid { display: grid; grid-template-columns: repeat(3, 69px); grid-auto-rows: 52px; gap: 5px 6px; }
.th { width: 69px; height: 52px; border: 1px solid #e0e0e0; background: #fff; }
.th.is-on { border: 2px solid #e06a2c; }
.th-t text { font-size: 5px; fill: #777; font-family: "Lato", sans-serif; }
.sm-for { margin-top: 20px; margin-left: 2px; font-size: 15.800px; line-height: 22px; color: #222; }
.sm-for b { font-weight: 700; color: #111; }
.sm-req { display: flex; align-items: center; margin-left: 2px; margin-top: 8px; font-size: 15.800px; color: #222; gap: 4px; height: 24px; }
.sm-req:nth-of-type(n) + .sm-req { margin-top: 10px; }
.pill { height: 24px; line-height: 24px; border-radius: 12px; padding: 0 15px; color: #fff; font-size: 15.800px; }
.pill-dim { background: #4b96b5; }
.pill-mea { background: #00b180; padding-right: 16px; }
```
